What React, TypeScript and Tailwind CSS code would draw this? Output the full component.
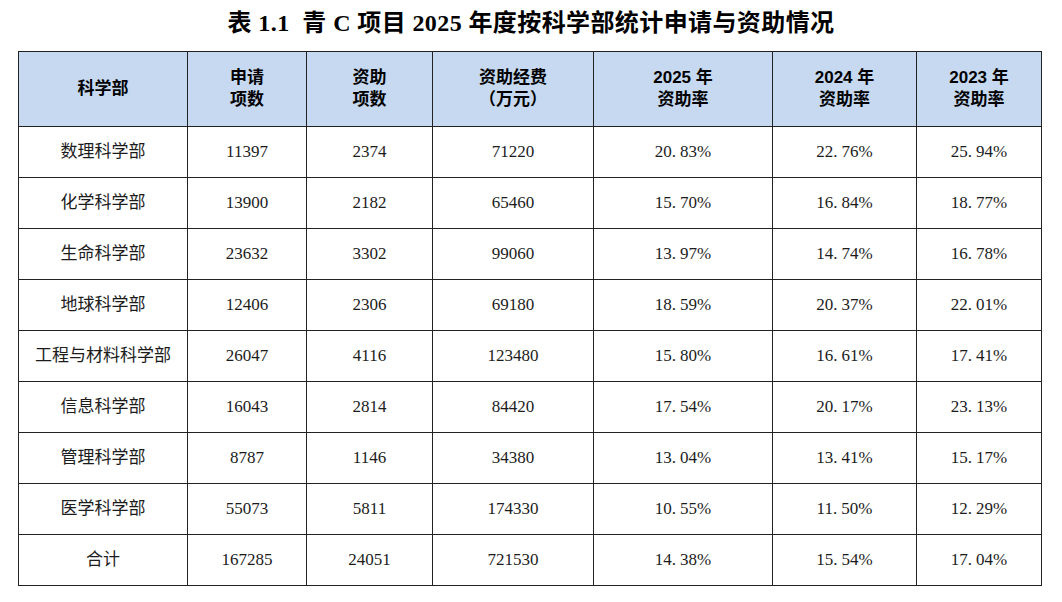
import React from "react";

const rows: [string, string, string, string, string, string, string][] = [
  ["数理科学部", "11397", "2374", "71220", "20.83%", "22.76%", "25.94%"],
  ["化学科学部", "13900", "2182", "65460", "15.70%", "16.84%", "18.77%"],
  ["生命科学部", "23632", "3302", "99060", "13.97%", "14.74%", "16.78%"],
  ["地球科学部", "12406", "2306", "69180", "18.59%", "20.37%", "22.01%"],
  ["工程与材料科学部", "26047", "4116", "123480", "15.80%", "16.61%", "17.41%"],
  ["信息科学部", "16043", "2814", "84420", "17.54%", "20.17%", "23.13%"],
  ["管理科学部", "8787", "1146", "34380", "13.04%", "13.41%", "15.17%"],
  ["医学科学部", "55073", "5811", "174330", "10.55%", "11.50%", "12.29%"],
  ["合计", "167285", "24051", "721530", "14.38%", "15.54%", "17.04%"],
];

const widths = [169, 119, 126, 161, 179, 144, 125];

function Pct({ v }: { v: string }) {
  const [a, b] = v.split(".");
  return (
    <span>
      {a}
      <span className="pr-[4px]">.</span>
      {b}
    </span>
  );
}

export default function App() {
  const head = [
    ["科学部"],
    ["申请", "项数"],
    ["资助", "项数"],
    ["资助经费", "（万元）"],
    ["2025 年", "资助率"],
    ["2024 年", "资助率"],
    ["2023 年", "资助率"],
  ];
  return (
    <div className="w-[1062px] h-[602px] bg-white overflow-hidden">
      <div
        className="h-[51px] pt-[8px] text-center text-[24px] leading-[30px] tracking-[0.4px] font-bold text-black"
        style={{ fontFamily: '"Liberation Serif", "Noto Sans CJK SC", serif' }}
      >
        表 1.1&nbsp; 青 C 项目 2025 年度按科学部统计申请与资助情况
      </div>
      <table className="ml-[18px] w-[1023px] border-collapse table-fixed border-[1.5px] border-[#3a3a3a]">
        <colgroup>
          {widths.map((w, i) => (
            <col key={i} style={{ width: w }} />
          ))}
        </colgroup>
        <thead>
          <tr className="h-[75px] bg-[#c6d9f0]">
            {head.map((h, i) => (
              <th
                key={i}
                className="border border-[#222] p-0 text-center align-middle text-[17px] leading-[22px] font-bold text-black"
                style={{ fontFamily: '"Liberation Sans", "Noto Sans CJK SC", sans-serif' }}
              >
                {h.map((l, j) => (
                  <div key={j}>{l}</div>
                ))}
              </th>
            ))}
          </tr>
        </thead>
        <tbody>
          {rows.map((r, i) => (
            <tr key={i} className="h-[51px]">
              {r.map((c, j) => (
                <td
                  key={j}
                  className="border border-[#222] p-0 text-center align-middle text-[17px] text-[#1c1c1c]"
                  style={{ fontFamily: '"Liberation Serif", "Noto Sans CJK SC", serif' }}
                >
                  {j >= 4 ? <Pct v={c} /> : c}
                </td>
              ))}
            </tr>
          ))}
        </tbody>
      </table>
    </div>
  );
}
